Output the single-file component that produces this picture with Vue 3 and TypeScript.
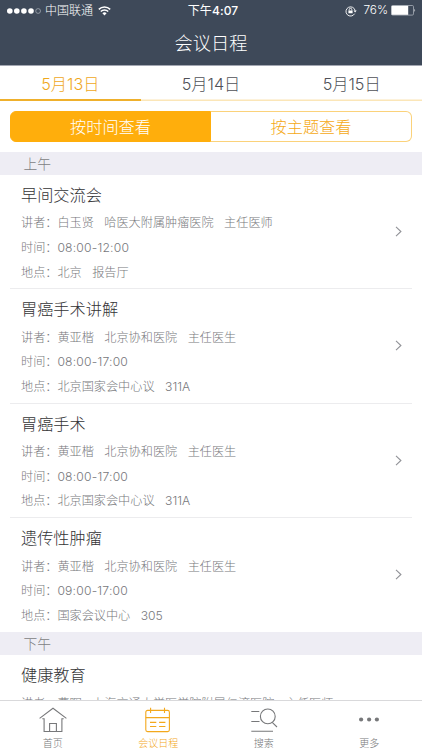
<script setup lang="ts">
interface Session {
  title: string
  speaker: string[]
  time?: string
  place?: string[]
}
interface Group {
  label: string
  sessions: Session[]
}

const days: string[] = ['5月13日', '5月14日', '5月15日']

const groups: Group[] = [
  {
    label: '上午',
    sessions: [
      { title: '早间交流会', speaker: ['白玉贤', '哈医大附属肿瘤医院', '主任医师'], time: '08:00-12:00', place: ['北京', '报告厅'] },
      { title: '胃癌手术讲解', speaker: ['黄亚楷', '北京协和医院', '主任医生'], time: '08:00-17:00', place: ['北京国家会中心议', '311A'] },
      { title: '胃癌手术', speaker: ['黄亚楷', '北京协和医院', '主任医生'], time: '08:00-17:00', place: ['北京国家会中心议', '311A'] },
      { title: '遗传性肿瘤', speaker: ['黄亚楷', '北京协和医院', '主任医生'], time: '09:00-17:00', place: ['国家会议中心', '305'] },
    ],
  },
  {
    label: '下午',
    sessions: [
      { title: '健康教育', speaker: ['曹晖', '上海交通大学医学院附属仁济医院', '主任医师'] },
    ],
  },
]
</script>

<template>
  <div class="screen">
    <header class="top">
      <div class="status">
        <div class="side">
          <svg class="signal" width="36" height="8" viewBox="0 0 36 8">
            <circle cx="2.8" cy="4" r="2.8" /><circle cx="9.8" cy="4" r="2.8" /><circle cx="16.9" cy="4" r="2.8" />
            <circle cx="24" cy="4" r="2.8" /><circle class="empty" cx="31.1" cy="4" r="2.4" />
          </svg>
          <span class="carrier">中国联通</span>
          <svg class="wifi" width="13" height="10" viewBox="0 0 13 10">
            <path d="M0.8 3.4a8.1 8.1 0 0 1 11.4 0M2.8 5.5a5.2 5.2 0 0 1 7.4 0" />
            <path class="dot" d="M4.4 7.2a3 3 0 0 1 4.2 0L6.5 9.4z" />
          </svg>
        </div>
        <span class="clock">下午<span class="digits">4:07</span></span>
        <div class="side end">
          <svg class="lock" width="12" height="12" viewBox="0 0 12 12">
            <path d="M9.6 8.7A4.6 4.6 0 1 1 10.1 5.6" />
            <path class="fill" d="M8.5 5.4h3.2L10.1 7.6zM3.4 5.4h4.2v2.9H3.4z" />
            <path d="M4.2 5.5V4.6a1.3 1.3 0 0 1 2.6 0v.9" />
          </svg>
          <span class="percent">76%</span>
          <svg class="battery" width="25" height="11" viewBox="0 0 25 11">
            <rect class="case" x="0.5" y="0.5" width="22" height="9.6" rx="1.2" />
            <rect class="fill" x="0.6" y="0.8" width="16.6" height="9" />
            <path class="fill" d="M23.5 3.7q1.3 1.6 0 3.2z" />
          </svg>
        </div>
      </div>
      <h1 class="heading">会议日程</h1>
    </header>

    <nav class="days">
      <button v-for="(day, i) in days" :key="day" class="day" :class="{ active: i === 0 }">{{ day }}</button>
    </nav>

    <div class="switch-wrap">
      <div class="switch">
        <button class="option on">按时间查看</button>
        <button class="option">按主题查看</button>
      </div>
    </div>

    <main class="list">
      <section v-for="group in groups" :key="group.label">
        <h2 class="group">{{ group.label }}</h2>
        <article v-for="s in group.sessions" :key="s.title" class="session">
          <div class="info">
            <h3 class="title">{{ s.title }}</h3>
            <p class="line"><span class="label">讲者：</span><span v-for="p in s.speaker" :key="p">{{ p }}</span></p>
            <p v-if="s.time" class="line"><span class="label">时间：</span><span class="time">{{ s.time }}</span></p>
            <p v-if="s.place" class="line"><span class="label">地点：</span><span v-for="p in s.place" :key="p">{{ p }}</span></p>
          </div>
          <svg class="chevron" width="7" height="11" viewBox="0 0 7 11"><path d="M1 0.8l4.9 4.7L1 10.2" /></svg>
        </article>
      </section>
    </main>

    <footer class="tabbar">
      <a class="tab">
        <svg class="icon" width="28" height="26" viewBox="0 0 28 26">
          <path d="M0.6 11.4L14 1.3l13.4 10.1M3.3 11.8h1.8v12.7h17.8V11.8h1.8M10.6 24.5v-8h6.8v8" />
        </svg>
        <span>首页</span>
      </a>
      <a class="tab active">
        <svg class="icon" width="28" height="26" viewBox="0 0 28 26">
          <rect x="1.8" y="3.4" width="23.6" height="21.2" rx="1.8" />
          <path d="M1.8 10.6h23.6M6.6 0.8v5.2M20.5 0.8v5.2M6 15.4h6.3M15.1 15.4h6.3M6 19.5h6.3M15.1 19.5h6.3" />
        </svg>
        <span>会议日程</span>
      </a>
      <a class="tab">
        <svg class="icon" width="28" height="26" viewBox="0 0 28 26">
          <circle cx="17.8" cy="9.4" r="7.4" />
          <path d="M22.2 15.4l4.8 4.6M1.3 4.5h8M1.3 14.5h8.2M1.3 24.2H23" />
        </svg>
        <span>搜索</span>
      </a>
      <a class="tab">
        <svg class="icon dots" width="28" height="26" viewBox="0 0 28 26">
          <circle cx="6.1" cy="12.5" r="2.1" /><circle cx="14.1" cy="12.5" r="2.1" /><circle cx="21.9" cy="12.5" r="2.1" />
        </svg>
        <span>更多</span>
      </a>
    </footer>
  </div>
</template>

<style>
body {
  margin: 0;
  background: #fff;
}
</style>

<style scoped>
.screen {
  width: 422px;
  height: 750px;
  display: flex;
  flex-direction: column;
  overflow: hidden;
  background: #fff;
  font-family: Inter, "Noto Sans CJK SC", sans-serif;
  font-weight: 300;
}
h1, h2, h3, p {
  margin: 0;
  font-weight: inherit;
}
button {
  border: 0;
  padding: 0;
  background: none;
  font: inherit;
  color: inherit;
}
svg {
  display: block;
  fill: none;
  flex: none;
}
.top {
  height: 65px;
  flex: none;
  background: #3e4959;
  border-bottom: 1px solid #a3a7b2;
  color: #fff;
}
.status {
  height: 21px;
  padding: 0 6px 0 7px;
  display: grid;
  grid-template-columns: 1fr auto 1fr;
  align-items: center;
  font-size: 12px;
  line-height: 21px;
}
.side {
  display: flex;
  align-items: center;
}
.end {
  justify-content: flex-end;
}
.signal {
  fill: #fff;
}
.signal .empty {
  fill: none;
  stroke: #aeb4bd;
  stroke-width: 0.7;
}
.carrier {
  margin-left: 2px;
}
.wifi {
  margin-left: 5px;
  stroke: #fff;
  stroke-width: 1.5;
}
.wifi .dot {
  fill: #fff;
  stroke: none;
}
.clock {
  padding-left: 3px;
  font-weight: 400;
  letter-spacing: 0.1px;
}
.digits {
  font-weight: 500;
}
.lock {
  stroke: #fff;
  stroke-width: 0.9;
}
.fill {
  fill: #fff;
  stroke: none;
}
.percent {
  margin: 0 3px 0 6px;
  font-size: 11.8px;
}
.battery .case {
  stroke: #a9b0ba;
  stroke-width: 0.8;
}
.heading {
  font-size: 18.2px;
  line-height: 44px;
  text-align: center;
}
.days {
  height: 35.4px;
  flex: none;
  display: grid;
  grid-template-columns: repeat(3, 1fr);
  box-sizing: border-box;
  box-shadow: inset 0 -1.5px #fbe6b8;
}
.day {
  width: 100%;
  padding-top: 3px;
  font-size: 16.2px;
  line-height: 30px;
  color: #4f5157;
  border-bottom: 2px solid transparent;
}
.day.active {
  color: #efa81c;
  border-bottom-color: #efb02c;
}
.switch-wrap {
  padding: 9.6px 10px 10.3px;
  flex: none;
}
.switch {
  height: 31px;
  display: grid;
  grid-template-columns: 1fr 1fr;
}
.option {
  box-sizing: border-box;
  height: 31px;
  padding-top: 1px;
  border: 1px solid #fbd27a;
  border-left: 0;
  border-radius: 0 6px 6px 0;
  font-size: 16.2px;
  line-height: 29px;
  color: #f5a916;
}
.option.on {
  border: 1px solid #ffae0c;
  border-radius: 6px 0 0 6px;
  background: #ffae0c;
  color: #fff;
}
.list {
  flex: 1;
  min-height: 0;
  overflow: hidden;
}
.group {
  height: 22.6px;
  padding-left: 23.5px;
  background: #eeedf4;
  color: #7d7e83;
  font-size: 13.8px;
  line-height: 25px;
}
.session {
  height: 114.4px;
  box-sizing: border-box;
  margin: 0 10px;
  padding: 8px 10px 0 11px;
  display: flex;
  justify-content: space-between;
  border-bottom: 1px solid #ececee;
}
.session:last-child {
  border-bottom-color: transparent;
}
.title {
  font-size: 16.2px;
  line-height: 25px;
  margin-bottom: 3.6px;
  color: #333335;
}
.line {
  display: flex;
  gap: 10.5px;
  height: 24.6px;
  line-height: 24.6px;
  font-size: 12.15px;
  color: #77787c;
  white-space: nowrap;
}
.label {
  margin-right: -10.5px;
}
.time {
  letter-spacing: 0.2px;
}
.chevron {
  margin-top: 43px;
  stroke: #919297;
  stroke-width: 1.1;
}
.tabbar {
  height: 50.5px;
  flex: none;
  box-sizing: border-box;
  display: grid;
  grid-template-columns: repeat(4, 1fr);
  border-top: 1px solid #d9d9db;
  background: #fff;
}
.tab {
  display: flex;
  flex-direction: column;
  align-items: center;
  padding-top: 6px;
  font-size: 10px;
  line-height: 20px;
  color: #77787a;
}
.tab.active {
  color: #f3a81c;
}
.icon {
  stroke: currentColor;
  stroke-width: 1.1;
}
.icon.dots {
  fill: currentColor;
  stroke: none;
}
</style>
